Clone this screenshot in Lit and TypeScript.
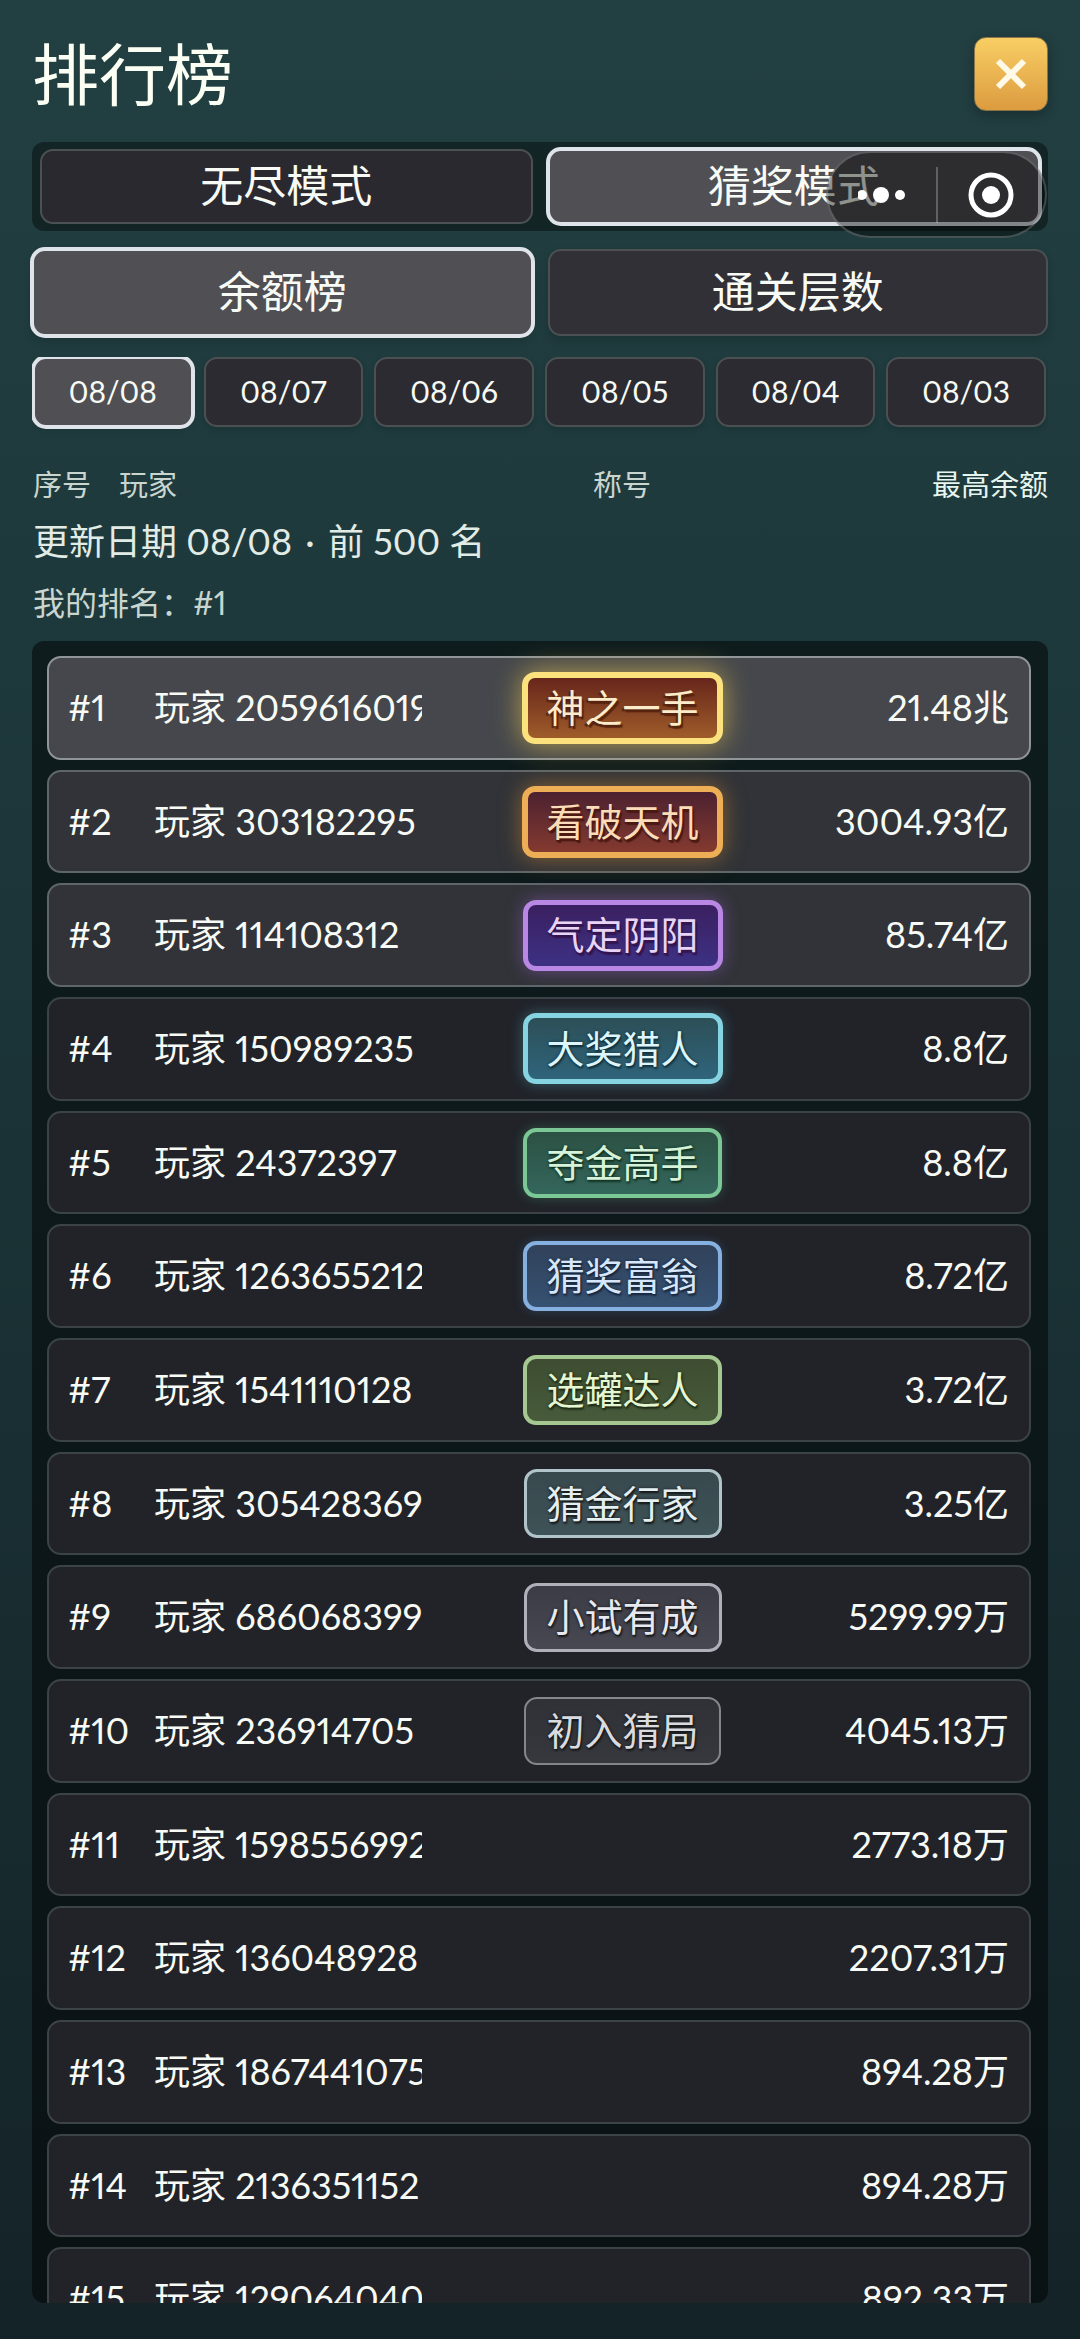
import { LitElement, html, css } from "lit";
import { customElement, state } from "lit/decorators.js";
import { classMap } from "lit/directives/class-map.js";

interface Player {
  id: string;
  balance: string;
  title?: string;
}

const PLAYERS: Player[] = [
  { id: "2059616019", balance: "21.48兆", title: "神之一手" },
  { id: "303182295", balance: "3004.93亿", title: "看破天机" },
  { id: "114108312", balance: "85.74亿", title: "气定阴阳" },
  { id: "150989235", balance: "8.8亿", title: "大奖猎人" },
  { id: "24372397", balance: "8.8亿", title: "夺金高手" },
  { id: "1263655212", balance: "8.72亿", title: "猜奖富翁" },
  { id: "1541110128", balance: "3.72亿", title: "选罐达人" },
  { id: "305428369", balance: "3.25亿", title: "猜金行家" },
  { id: "686068399", balance: "5299.99万", title: "小试有成" },
  { id: "236914705", balance: "4045.13万", title: "初入猜局" },
  { id: "1598556992", balance: "2773.18万" },
  { id: "136048928", balance: "2207.31万" },
  { id: "1867441075", balance: "894.28万" },
  { id: "2136351152", balance: "894.28万" },
  { id: "129064040", balance: "892.33万" },
];

const MODES = ["无尽模式", "猜奖模式"];
const BOARDS = ["余额榜", "通关层数"];
const DATES = ["08/08", "08/07", "08/06", "08/05", "08/04", "08/03"];

@customElement("app-root")
export class AppRoot extends LitElement {
  @state() private mode = 1;
  @state() private board = 0;
  @state() private date = 0;

  static styles = css`
    :host {
      display: block;
      position: relative;
      height: 100vh;
      overflow: hidden;
      color: #f8fbf5;
      background: linear-gradient(#223f41, #1d383b 30%, #142328);
      font-family: Lato, "Noto Sans CJK SC", sans-serif;
      font-variant-numeric: proportional-nums;
    }
    * {
      box-sizing: border-box;
    }
    button {
      margin: 0;
      padding: 0;
      border: 0;
      background: none;
      color: inherit;
      font: inherit;
      font-variant-numeric: inherit;
      cursor: pointer;
    }
    .page {
      display: flex;
      flex-direction: column;
      height: 100%;
      padding: 37px 32px 36px;
    }
    .head {
      display: flex;
      align-items: center;
      justify-content: space-between;
      height: 74px;
      margin-bottom: 31px;
    }
    h1 {
      margin: 0;
      font-size: 67px;
      font-weight: 400;
      line-height: 74px;
      color: #fbfff4;
    }
    .close {
      display: flex;
      align-items: center;
      justify-content: center;
      width: 74px;
      height: 74px;
      border: 1px solid #8a7448;
      border-radius: 12px;
      background: linear-gradient(#f8ce64, #dc9b3f);
      box-shadow: 0 4px 12px rgba(0, 0, 0, 0.25);
    }
    .close svg {
      width: 32px;
      height: 32px;
    }
    .modes,
    .boards {
      display: grid;
      grid-template-columns: 1fr 1fr;
      gap: 15px;
      font-size: 43px;
    }
    .modes {
      padding: 7px 8px;
      border-radius: 12px;
      background: rgba(0, 0, 0, 0.4);
      margin-bottom: 18px;
    }
    .modes .tab {
      height: 75px;
      background: #2a2930;
    }
    .boards {
      margin-bottom: 21px;
    }
    .boards .tab {
      height: 87px;
      background: #303036;
      box-shadow: 0 4px 10px rgba(0, 0, 0, 0.16);
    }
    .dates {
      display: grid;
      grid-template-columns: repeat(6, 1fr);
      gap: 11px;
      padding: 0 2px 10px 1px;
      margin-bottom: 33px;
      overflow: hidden;
      font-size: 30px;
    }
    .dates .tab {
      height: 70px;
      background: #2c2b32;
      box-shadow: 0 2px 6px rgba(0, 0, 0, 0.14);
    }
    .tab {
      padding-bottom: 2px;
      border: 2px solid #4b5053;
      border-radius: 13px;
      line-height: 1;
    }
    .modes .tab.on,
    .boards .tab.on,
    .dates .tab.on {
      background: #4f4f54;
      outline: 4px solid #dfe3ea;
      outline-offset: -2px;
    }
    .rank-table {
      display: flex;
      flex-direction: column;
      flex: 1;
      min-height: 0;
    }
    thead {
      display: block;
      margin-bottom: 18px;
      padding-left: 1px;
      color: #c9d5cf;
    }
    .cols {
      display: grid;
      grid-template-columns: 86px 303fr 400fr 226fr;
      font-size: 29px;
      line-height: 30px;
      margin-bottom: 16px;
    }
    .info {
      display: block;
    }
    .cols th,
    .info td,
    .row td,
    .row th {
      padding: 0;
      font-weight: 400;
      text-align: left;
      white-space: nowrap;
    }
    .info td {
      display: block;
    }
    .cols .mid,
    .row .mid {
      text-align: center;
    }
    .cols .end,
    .row .end {
      text-align: right;
    }
    .cols .end {
      color: #e6f6ee;
    }
    .updated {
      margin: 0 0 17px;
      font-size: 36px;
      line-height: 50px;
      color: #e2ece6;
    }
    .dot {
      margin: 0 4px;
    }
    .mine {
      margin: 0;
      font-size: 32px;
      line-height: 40px;
    }
    .list {
      display: flex;
      flex-direction: column;
      gap: 10px;
      flex: 1;
      min-height: 0;
      padding: 15px 17px 0 15px;
      border-radius: 12px;
      background: rgba(0, 0, 0, 0.5);
      overflow: hidden;
    }
    .row {
      display: grid;
      grid-template-columns: 86px 268fr 400fr 186fr;
      align-items: center;
      flex: none;
      height: 9.6vw;
      padding: 0 20px 0 19px;
      border: 2px solid #3c4348;
      border-radius: 14px;
      background: #212329;
      font-size: 36px;
      line-height: 50px;
    }
    .row.podium {
      border-color: #5f6669;
      background: #313338;
    }
    .row.leader {
      border-color: #8f9599;
      background: #45474c;
    }
    .row .rank,
    .row .name,
    .row .end {
      padding-bottom: 2px;
    }
    .row .name {
      overflow: hidden;
    }
    .badge {
      --line: 2px;
      display: inline-flex;
      align-items: center;
      justify-content: center;
      width: calc(195px + var(--line));
      height: calc(66px + var(--line));
      padding-bottom: 2px;
      border: var(--line) solid #83868d;
      border-radius: 13px;
      background: linear-gradient(#2f3137, #37383d);
      color: #d9dbdf;
      font-size: 38px;
      line-height: 1;
      vertical-align: middle;
      text-shadow: 0 0 3px #16171a, 1px 2px 2px #16171a;
    }
    .b1 {
      --line: 6px;
      border-color: #fbe27c;
      background: linear-gradient(#67261b, #9f5c2a);
      color: #fdeccb;
      box-shadow: 0 0 28px rgba(245, 208, 80, 0.65);
      text-shadow: -2px 2px 1px #57240f, 2px 3px 1px #57240f;
    }
    .b2 {
      --line: 6px;
      border-color: #edae55;
      background: linear-gradient(#4c2130, #843a2f);
      color: #fbdcb8;
      box-shadow: 0 0 22px rgba(230, 150, 50, 0.5);
      text-shadow: 0 2px 1px #4c1a14, 2px 3px 1px #4c1a14;
    }
    .b3 {
      --line: 5px;
      border-color: #b888e4;
      background: linear-gradient(#3a2060, #3d3184);
      color: #e9d4f6;
      box-shadow: 0 0 18px rgba(165, 100, 225, 0.45);
      text-shadow: 0 2px 1px #331650, 2px 3px 1px #331650;
    }
    .b4 {
      --line: 5px;
      border-color: #86d3e2;
      background: linear-gradient(#2c4f57, #2f647b);
      color: #dcf6fb;
      box-shadow: 0 0 14px rgba(100, 200, 220, 0.35);
      text-shadow: 0 0 3px #10303c, 1px 2px 2px #10303c;
    }
    .b5 {
      --line: 4px;
      border-color: #7bc795;
      background: linear-gradient(#2c5143, #34665c);
      color: #d6f3d9;
      box-shadow: 0 0 12px rgba(80, 190, 130, 0.3);
      text-shadow: 0 0 3px #123424, 1px 2px 2px #123424;
    }
    .b6 {
      --line: 4px;
      border-color: #86b0e0;
      background: linear-gradient(#31425a, #365172);
      color: #d6e7fb;
      box-shadow: 0 0 10px rgba(90, 150, 220, 0.25);
      text-shadow: 0 0 3px #18253a, 1px 2px 2px #18253a;
    }
    .b7 {
      --line: 4px;
      border-color: #a5c893;
      background: linear-gradient(#3e4d31, #475b3b);
      color: #e5f6d2;
      text-shadow: 0 0 3px #1c2812, 1px 2px 2px #1c2812;
    }
    .b8 {
      --line: 3px;
      border-color: #b0c4c9;
      background: linear-gradient(#38494e, #3e5357);
      color: #e4eff1;
    }
    .b9 {
      --line: 3px;
      border-color: #aeb1ba;
      background: linear-gradient(#3b3c45, #484852);
      color: #e8e9ef;
    }
    .capsule {
      position: absolute;
      top: 151px;
      right: 33px;
      display: flex;
      align-items: center;
      width: 221px;
      height: 87px;
      border: 2px solid rgba(255, 255, 255, 0.22);
      border-radius: 44px;
      background: rgba(0, 0, 0, 0.42);
    }
    .capsule button {
      flex: 1;
      display: flex;
      align-items: center;
      justify-content: center;
      height: 100%;
    }
    .capsule .rule {
      width: 2px;
      height: 56px;
      background: rgba(255, 255, 255, 0.25);
    }
    .capsule svg {
      width: 48px;
      height: 48px;
    }
  `;

  private tab(label: string, on: boolean, pick: () => void) {
    return html`<button
      class=${classMap({ tab: true, on })}
      aria-pressed=${on ? "true" : "false"}
      @click=${pick}
    >${label}</button>`;
  }

  private row(p: Player, i: number) {
    return html`<tr class=${classMap({ row: true, podium: i < 3, leader: i === 0 })}>
      <td class="rank">#${i + 1}</td>
      <th class="name" scope="row">玩家 ${p.id}</th>
      <td class="mid">${p.title ? html`<span class="badge b${i + 1}">${p.title}</span>` : ""}</td>
      <td class="end">${p.balance}</td>
    </tr>`;
  }

  render() {
    return html`
      <main class="page">
        <header class="head">
          <h1>排行榜</h1>
          <button class="close" aria-label="关闭">
            <svg viewBox="0 0 32 32" fill="none" stroke="#fff9e8" stroke-width="6">
              <path d="M3 3L29 29M29 3L3 29" />
            </svg>
          </button>
        </header>
        <nav class="modes">
          ${MODES.map((m, i) => this.tab(m, i === this.mode, () => (this.mode = i)))}
        </nav>
        <nav class="boards">
          ${BOARDS.map((b, i) => this.tab(b, i === this.board, () => (this.board = i)))}
        </nav>
        <nav class="dates">
          ${DATES.map((d, i) => this.tab(d, i === this.date, () => (this.date = i)))}
        </nav>
        <table class="rank-table">
          <thead>
            <tr class="cols">
              <th scope="col">序号</th>
              <th scope="col">玩家</th>
              <th scope="col" class="mid">称号</th>
              <th scope="col" class="end">最高余额</th>
            </tr>
            <tr class="info">
              <td colspan="4">
                <p class="updated">更新日期 ${DATES[this.date]} <span class="dot">·</span> 前 500 名</p>
                <p class="mine">我的排名：#1</p>
              </td>
            </tr>
          </thead>
          <tbody class="list">
            ${PLAYERS.map((p, i) => this.row(p, i))}
          </tbody>
        </table>
      </main>
      <div class="capsule">
        <button aria-label="更多">
          <svg viewBox="0 0 48 48" fill="#fff">
            <circle cx="4" cy="24" r="5" />
            <circle cx="23" cy="24" r="8" />
            <circle cx="42" cy="24" r="5" />
          </svg>
        </button>
        <span class="rule"></span>
        <button aria-label="退出">
          <svg viewBox="0 0 48 48">
            <circle cx="24" cy="24" r="20" fill="none" stroke="#fff" stroke-width="5" />
            <circle cx="24" cy="24" r="9" fill="#fff" />
          </svg>
        </button>
      </div>
    `;
  }
}
